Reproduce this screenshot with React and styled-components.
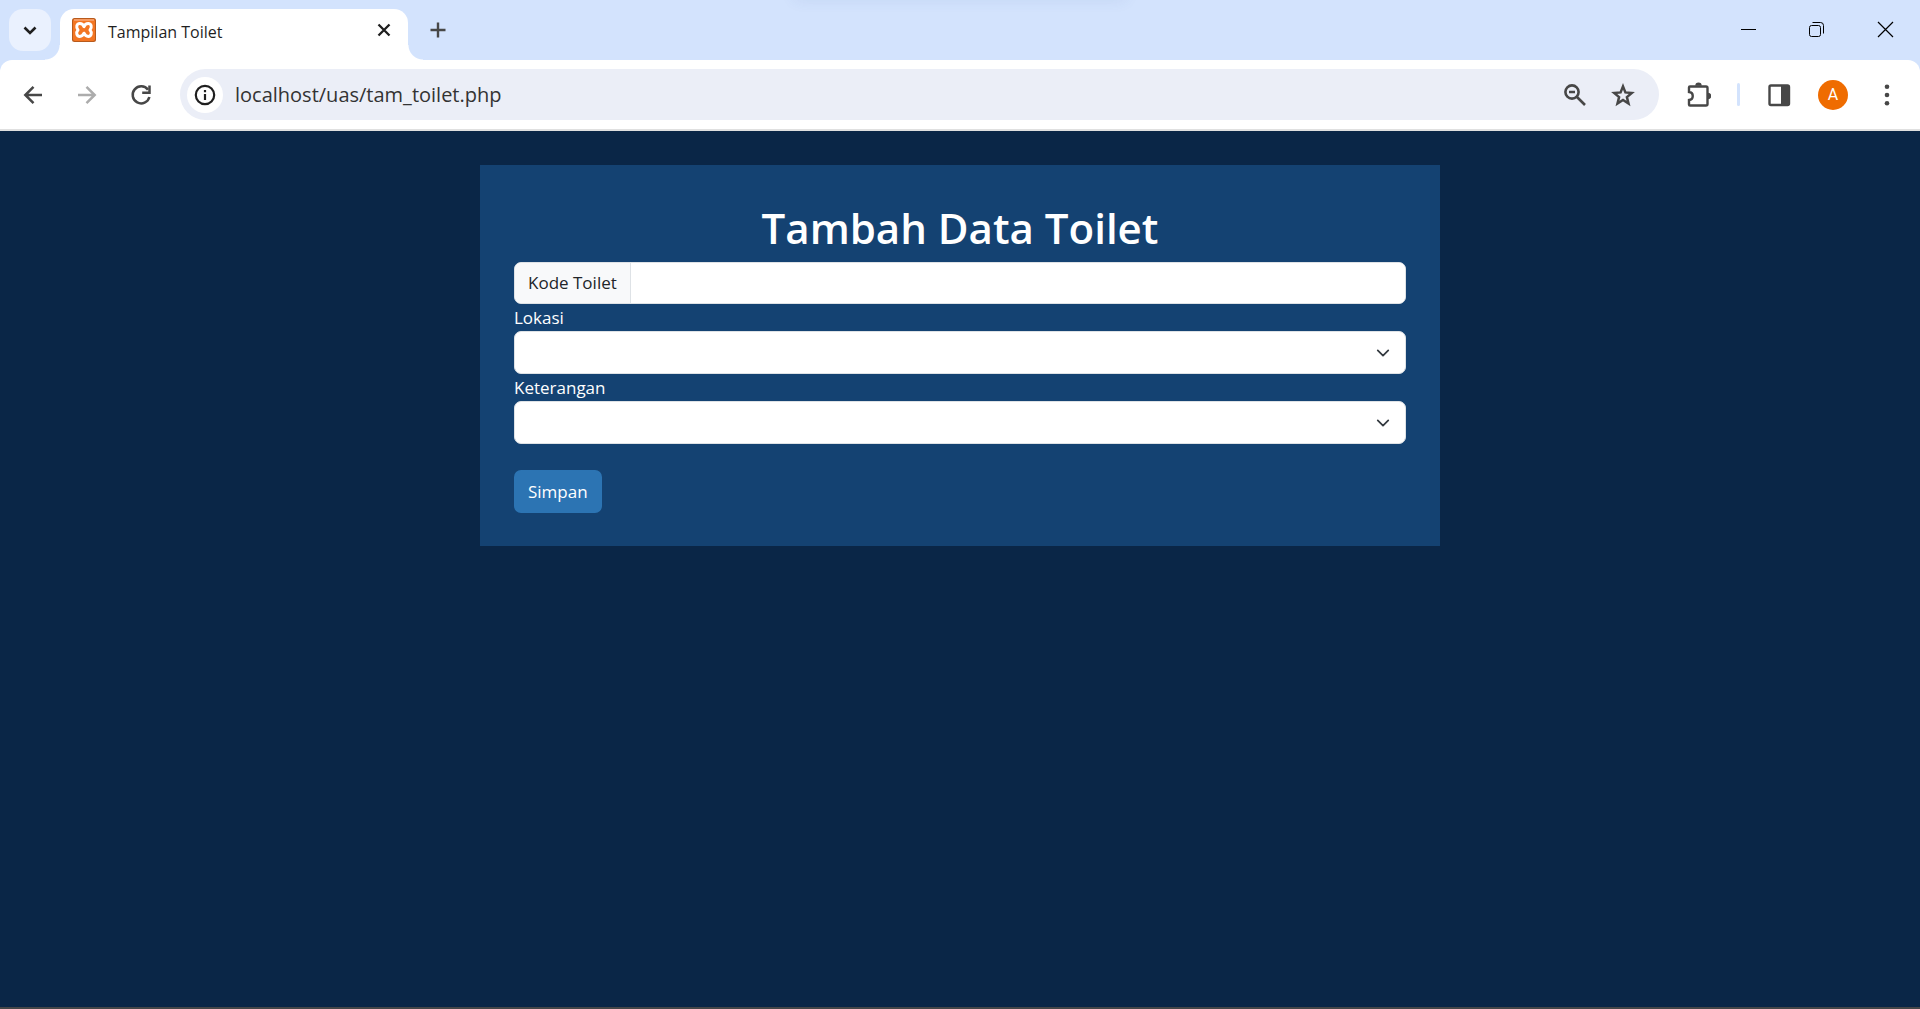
import React from "react";
import styled, { createGlobalStyle } from "styled-components";

const strip = "#d3e3fd";
const uiFont = '"Open Sans", "Noto Sans", sans-serif';

const GlobalStyle = createGlobalStyle`
  *, *::before, *::after { box-sizing: border-box; }
  body { margin: 0; font-family: ${uiFont}; }
  button, input, select { font: inherit; margin: 0; border: 0; }
  h1 { margin: 0; }
`;

const Window = styled.div`
  min-height: 100vh;
  display: flex;
  flex-direction: column;
  background: ${strip};
`;

const TabStrip = styled.header`
  position: relative;
  display: flex;
  height: 60px;
  padding-left: 9px;
  overflow: hidden;

  &::before {
    content: "";
    position: absolute;
    top: -14px;
    left: 50%;
    width: 330px;
    height: 10px;
    margin-left: -165px;
    box-shadow: 0 2px 16px rgba(60, 90, 150, 0.14);
  }
`;

const IconButton = styled.button`
  display: flex;
  align-items: center;
  justify-content: center;
  flex: none;
  width: ${(p) => p.$size || 42}px;
  height: ${(p) => p.$size || 42}px;
  padding: 0;
  border-radius: ${(p) => p.$radius || "50%"};
  background: ${(p) => p.$fill || "transparent"};
  color: ${(p) => p.$color || "#474747"};
`;

const StripButton = styled(IconButton)`
  margin-top: 9px;
`;

const Tab = styled.div`
  position: relative;
  display: flex;
  align-items: center;
  width: 348px;
  margin: 9px 9px 0;
  padding: 0 12px 9px;
  border-radius: 14px 14px 0 0;
  background: #fff;

  &::before,
  &::after {
    content: "";
    position: absolute;
    bottom: 0;
    width: 15px;
    height: 15px;
  }
  &::before {
    right: 100%;
    background: radial-gradient(circle at 0 0, transparent 14px, #fff 15px);
  }
  &::after {
    left: 100%;
    background: radial-gradient(circle at 100% 0, transparent 14px, #fff 15px);
  }
`;

const TabTitle = styled.span`
  flex: 1;
  padding: 3px 0 0 12px;
  font-size: 16px;
  line-height: 24px;
  color: #1f1f1f;
`;

const WindowControls = styled.div`
  display: flex;
  margin-left: auto;
`;

const WindowButton = styled.button`
  display: flex;
  align-items: center;
  justify-content: center;
  width: 69px;
  padding: 0;
  background: transparent;
  color: #000;
`;

const Toolbar = styled.nav`
  display: flex;
  align-items: center;
  gap: 12px;
  height: 71px;
  padding: 0 12px;
  border-bottom: 2px solid #e0e0e0;
  border-radius: 12px 12px 0 0;
  background: #fff;
`;

const AddressBar = styled.div`
  display: flex;
  align-items: center;
  gap: 12px;
  flex: 1;
  height: 51px;
  margin: 0 6px;
  padding: 0 18px 0 7px;
  border-radius: 26px;
  background: #ebeef7;
`;

const UrlInput = styled.input`
  flex: 1;
  min-width: 0;
  padding: 0;
  background: transparent;
  font-size: 20px;
  line-height: 28px;
  color: #333;
  outline: 0;
`;

const Divider = styled.span`
  width: 3px;
  height: 23px;
  margin: 0 6px;
  border-radius: 2px;
  background: ${strip};
`;

const Avatar = styled.span`
  display: flex;
  align-items: center;
  justify-content: center;
  width: 30px;
  height: 30px;
  border-radius: 50%;
  background: #ef6c00;
  color: #fff;
  font-family: Roboto, sans-serif;
  font-size: 16px;
  line-height: 30px;
`;

const Page = styled.main`
  flex: 1;
  padding-top: 34px;
  border-bottom: 2px solid #444648;
  background: #0a2647;
`;

const Card = styled.form`
  width: 50%;
  margin: 0 auto;
  padding: 34px 34px 33px;
  background: #144272;
  color: #fff;
  font-size: 17px;
  line-height: 27px;
`;

const Title = styled.h1`
  padding-bottom: 5px;
  font-size: 42px;
  font-weight: 600;
  line-height: 58px;
  text-align: center;
`;

const InputGroup = styled.div`
  display: flex;
  height: 42px;
  border: 1px solid #dee2e6;
  border-radius: 7px;
  background: #fff;
  overflow: hidden;
`;

const Addon = styled.label`
  padding: 6px 13px;
  border-right: 1px solid #dee2e6;
  background: #f8f9fa;
  color: #212529;
`;

const TextInput = styled.input`
  flex: 1;
  min-width: 0;
  padding: 0 14px;
  background: #fff;
  color: #212529;
  outline: 0;
`;

const Label = styled.label`
  display: block;
`;

const chevron =
  "data:image/svg+xml,%3csvg xmlns='http://www.w3.org/2000/svg' viewBox='0 0 16 16'%3e%3cpath fill='none' stroke='%23343a40' stroke-linecap='round' stroke-linejoin='round' stroke-width='2' d='m2 5 6 6 6-6'/%3e%3c/svg%3e";

const Select = styled.select`
  display: block;
  width: 100%;
  height: 43px;
  padding: 0 40px 0 14px;
  border: 1px solid #dee2e6;
  border-radius: 7px;
  appearance: none;
  background: #fff url("${chevron}") no-repeat right 13px center / 18px 14px;
  color: #212529;
`;

const SubmitButton = styled.button`
  display: block;
  height: 43px;
  margin-top: 26px;
  padding: 0 14px;
  border-radius: 7px;
  background: #2c74b3;
  color: #fff;
`;

const Svg = ({ size = 24, width = 2, children }) => (
  <svg
    width={size}
    height={size}
    viewBox={`0 0 ${size} ${size}`}
    fill="none"
    stroke="currentColor"
    strokeWidth={width}
    aria-hidden="true"
  >
    {children}
  </svg>
);

const Favicon = () => (
  <svg width="24" height="24" viewBox="0 0 24 24" aria-hidden="true">
    <rect width="24" height="24" rx="2.5" fill="#b85a1c" />
    <rect x="1" y="1" width="22" height="22" rx="2" fill="#f37623" />
    <path d="M2 2h20" stroke="#f9a878" strokeWidth="1.5" />
    <path
      d="M12 8.6C11 6 9.5 5.4 7.8 5.4C4.5 5.4 3.8 9.5 6 12C3.8 14.5 4.5 18.4 7.800 18.4C9.500 18.4 11 17.6 12 15.2C13 17.6 14.5 18.4 16.2 18.4C19.5 18.4 20.2 14.5 18 12C20.2 9.5 19.5 5.4 16.2 5.4C14.5 5.4 13 6 12 8.6Z"
      fill="#f37623"
      stroke="#fff"
      strokeWidth="3"
      strokeLinejoin="round"
    />
  </svg>
);

export default function App() {
  return (
    <Window>
      <GlobalStyle />
      <TabStrip>
        <StripButton type="button" aria-label="Search tabs" $radius="14px" $fill="#eaf1fe" $color="#1f1f1f">
          <Svg width={2.6}><path d="M6.5 9.5l5.5 5.5 5.5-5.5" /></Svg>
        </StripButton>
        <Tab>
          <Favicon />
          <TabTitle>Tampilan Toilet</TabTitle>
          <IconButton type="button" aria-label="Close tab" $size={24} $color="#1f1f1f">
            <Svg width={2.3}><path d="M6.5 6.5l11 11M17.5 6.5l-11 11" /></Svg>
          </IconButton>
        </Tab>
        <StripButton type="button" aria-label="New tab">
          <Svg width={2.4}><path d="M12 4.5v15M4.5 12h15" /></Svg>
        </StripButton>
        <WindowControls>
          <WindowButton type="button" aria-label="Minimize">
            <Svg width={1}><path d="M5 11.5h15" /></Svg>
          </WindowButton>
          <WindowButton type="button" aria-label="Restore">
            <Svg width={1}>
              <rect x="4.5" y="7.5" width="11" height="11" rx="2" />
              <path d="M7.5 4.5h8a3 3 0 0 1 3 3v8" />
            </Svg>
          </WindowButton>
          <WindowButton type="button" aria-label="Close">
            <Svg width={1.2}><path d="M4 4l15 15M19 4l-15 15" /></Svg>
          </WindowButton>
        </WindowControls>
      </TabStrip>

      <Toolbar>
        <IconButton type="button" aria-label="Back">
          <Svg width={2.5}><path d="M21 12H5M12.5 3.800L4.300 12l8.200 8.200" /></Svg>
        </IconButton>
        <IconButton type="button" aria-label="Forward" $color="#acacac">
          <Svg width={2.5}><path d="M3 12h16M11.500 3.800L19.700 12l-8.200 8.200" /></Svg>
        </IconButton>
        <IconButton type="button" aria-label="Reload">
          <Svg width={2.5}>
            <path d="M19 6.8A8.500 8.500 0 1 0 20.400 14" />
            <path d="M20.500 2.500v7.300h-7.300" />
          </Svg>
        </IconButton>
        <AddressBar>
          <IconButton type="button" aria-label="Site information" $size={36} $fill="#fff" $color="#1f1f1f">
            <Svg width={2.2}>
              <circle cx="12" cy="12" r="9.2" />
              <path d="M12 11v6M12 7v2.200" />
            </Svg>
          </IconButton>
          <UrlInput aria-label="Address" type="text" defaultValue="localhost/uas/tam_toilet.php" />
          <IconButton type="button" aria-label="Zoom" $size={36}>
            <Svg width={2.6}>
              <circle cx="9" cy="9" r="6.600" />
              <path d="M14 14l8 8M6 9h6" />
            </Svg>
          </IconButton>
          <IconButton type="button" aria-label="Bookmark this page" $size={36}>
            <Svg width={2.5}>
              <path d="M12 3.400l2.400 6 6.400.5-4.900 4.200 1.600 6.400L12 17l-5.500 3.500 1.600-6.400L3.200 9.900l6.400-.5z" />
            </Svg>
          </IconButton>
        </AddressBar>
        <IconButton type="button" aria-label="Extensions">
          <Svg size={26} width={2.4}>
            <path d="M5 4.500h16a1.500 1.500 0 0 1 1.500 1.500v16a1.500 1.500 0 0 1-1.500 1.500H5a1 1 0 0 1-1-1v-4.500c5-.5 5-7.500 0-8V5.500a1 1 0 0 1 1-1z" />
            <path d="M10.300 3.800a3.200 3.200 0 0 1 6.400 0zM23 10.800a3.200 3.200 0 0 1 0 6.400z" fill="currentColor" stroke="none" />
          </Svg>
        </IconButton>
        <Divider />
        <IconButton type="button" aria-label="Side panel">
          <Svg width={2.4}>
            <rect x="2.500" y="2.500" width="19.500" height="19.500" rx="1.500" />
            <path d="M14 2h8v20h-8z" fill="currentColor" stroke="none" />
          </Svg>
        </IconButton>
        <IconButton type="button" aria-label="Profile">
          <Avatar>A</Avatar>
        </IconButton>
        <IconButton type="button" aria-label="Menu">
          <Svg>
            <g fill="currentColor" stroke="none">
              <circle cx="12" cy="3.800" r="2.300" />
              <circle cx="12" cy="12" r="2.300" />
              <circle cx="12" cy="20.200" r="2.300" />
            </g>
          </Svg>
        </IconButton>
      </Toolbar>

      <Page>
        <Card onSubmit={(e) => e.preventDefault()}>
          <Title>Tambah Data Toilet</Title>
          <InputGroup>
            <Addon htmlFor="kode">Kode Toilet</Addon>
            <TextInput id="kode" type="text" />
          </InputGroup>
          <Label htmlFor="lokasi">Lokasi</Label>
          <Select id="lokasi" />
          <Label htmlFor="keterangan">Keterangan</Label>
          <Select id="keterangan" />
          <SubmitButton type="submit">Simpan</SubmitButton>
        </Card>
      </Page>
    </Window>
  );
}
